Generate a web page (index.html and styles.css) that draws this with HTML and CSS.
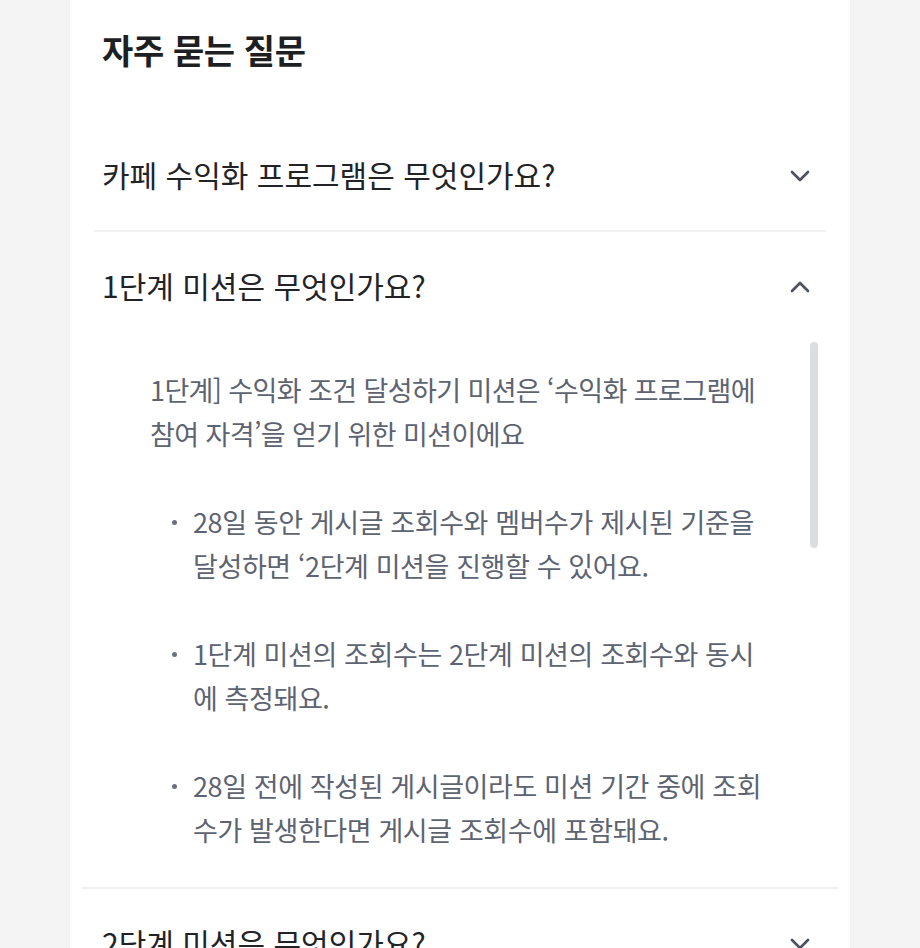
FILE: index.html
```html
<!DOCTYPE html>
<html lang="ko">
<head>
<meta charset="utf-8">
<title>자주 묻는 질문</title>
<link rel="stylesheet" href="styles.css">
</head>
<body>
<div class="card">
  <h2 class="title">자주 묻는 질문</h2>
  <div class="faq">
    <div class="item">
      <div class="q">
        <span class="q-text">카페 수익화 프로그램은 무엇인가요?</span>
        <svg class="chev" width="20" height="12" viewBox="0 0 20 12"><path d="M2 2 L10 10 L18 2" fill="none" stroke="#4b515e" stroke-width="2.6" stroke-linecap="round" stroke-linejoin="round"/></svg>
      </div>
    </div>
    <div class="item open">
      <div class="q">
        <span class="q-text">1단계 미션은 무엇인가요?</span>
        <svg class="chev" width="20" height="12" viewBox="0 0 20 12"><path d="M2 10 L10 2 L18 10" fill="none" stroke="#4b515e" stroke-width="2.6" stroke-linecap="round" stroke-linejoin="round"/></svg>
      </div>
      <div class="answer">
        <div class="scroll-thumb"></div>
        <p class="lead">1단계] 수익화 조건 달성하기 미션은 ‘수익화 프로그램에 참여 자격’을 얻기 위한 미션이에요</p>
        <ul class="points">
          <li>28일 동안 게시글 조회수와 멤버수가 제시된 기준을 달성하면 ‘2단계 미션을 진행할 수 있어요.</li>
          <li>1단계 미션의 조회수는 2단계 미션의 조회수와 동시에 측정돼요.</li>
          <li>28일 전에 작성된 게시글이라도 미션 기간 중에 조회수가 발생한다면 게시글 조회수에 포함돼요.</li>
        </ul>
      </div>
    </div>
    <div class="item">
      <div class="q">
        <span class="q-text">2단계 미션은 무엇인가요?</span>
        <svg class="chev" width="20" height="12" viewBox="0 0 20 12"><path d="M2 2 L10 10 L18 2" fill="none" stroke="#4b515e" stroke-width="2.6" stroke-linecap="round" stroke-linejoin="round"/></svg>
      </div>
    </div>
  </div>
</div>
</body>
</html>
```
FILE: styles.css
```css
html, body {
  margin: 0;
  padding: 0;
}
body {
  background: #f4f4f4;
  font-family: "Noto Sans CJK KR", "Noto Sans", sans-serif;
  height: 948px;
  overflow: hidden;
}
.card {
  margin-left: 70px;
  width: 780px;
  min-height: 948px;
  background: #ffffff;
  padding: 28px 24px 0;
  box-sizing: border-box;
}
.title {
  margin: 0 0 49px 8px;
  font-size: 34px;
  line-height: 44px;
  font-weight: 700;
  color: #1e1f23;
  letter-spacing: -0.4px;
}
.item {
  border-bottom: 2px solid #f1f1f3;
}
.item.open {
  margin: 0 -12px;
  padding: 0 12px;
}
.q {
  height: 109px;
  display: flex;
  align-items: center;
  justify-content: space-between;
  padding: 0 16px 0 8px;
}
.q-text {
  font-size: 30px;
  line-height: 40px;
  margin-top: -3px;
  color: #222327;
  letter-spacing: 0;
}
.chev {
  display: block;
}
.answer {
  position: relative;
  padding: 27px 0 35px 56px;
}
.scroll-thumb {
  position: absolute;
  right: 8px;
  top: 1px;
  width: 8px;
  height: 206px;
  border-radius: 4px;
  background: #dcdde1;
}
.lead {
  margin: 0 0 44px;
  width: 625px;
  font-size: 27px;
  line-height: 44px;
  color: #5d6370;
  letter-spacing: -0.6px;
}
.points {
  list-style: none;
  margin: 0;
  padding: 0 0 0 43px;
  width: 578px;
}
.points li {
  position: relative;
  font-size: 27px;
  line-height: 44px;
  color: #5d6370;
  letter-spacing: -0.4px;
  margin-bottom: 44px;
}
.points li:last-child {
  margin-bottom: 0;
}
.points li::before {
  content: "";
  position: absolute;
  left: -21px;
  top: 20px;
  width: 5px;
  height: 5px;
  border-radius: 50%;
  background: #6a707c;
}
```
